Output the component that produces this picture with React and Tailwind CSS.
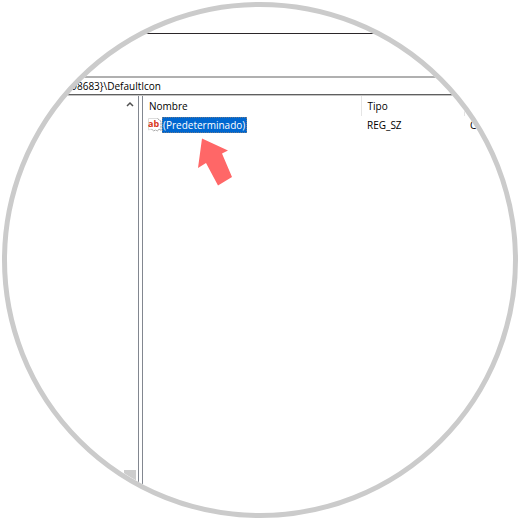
import { useState } from "react";

const valores = [{ nombre: "(Predeterminado)", tipo: "REG_SZ", datos: "C:\\" }];

function IconoCadena() {
    return (
        <svg width="14" height="14" viewBox="0 0 14 14" className="shrink-0" aria-hidden="true">
            <path
                d="M.5.5h9l3.500 3v9l-2-1.500-1.500 2-2-1-2 1-2-2-3 1z"
                fill="#fff"
                stroke="#dcdcdc"
            />
            <path
                d="M9.500.5 13 3.500v9l-2-1.500-1.500 2-2-1-2 1-2-2"
                fill="none"
                stroke="#a8a8a8"
                strokeDasharray="2 1"
            />
            <text
                x="0"
                y="9"
                fontSize="9"
                fontWeight="700"
                fontFamily="'Open Sans', sans-serif"
                fill="#d8361a"
            >
                ab
            </text>
        </svg>
    );
}

function Flecha() {
    return (
        <svg
            width="36"
            height="50"
            viewBox="0 0 36 50"
            className="absolute top-5 left-12"
            aria-hidden="true"
        >
            <path d="M6 1.500 32 13.500 26 16.500 36 40 22 48.500 10 26 2 31z" fill="#ff6767" />
        </svg>
    );
}

export default function App() {
    const [seleccionado, setSeleccionado] = useState("(Predeterminado)");

    return (
        <div className="bg-white p-0.5 font-['Open_Sans','Noto_Sans',sans-serif] text-[10px] leading-4 text-black">
            <main className="flex aspect-square w-full flex-col overflow-hidden rounded-full border-5 border-[#cbcbcb] bg-white">
                <div className="h-[27px] shrink-0 border-b border-[#2b2629]" />

                {/* Barra de direcciones */}
                <div className="h-[42px] shrink-0" />
                <div className="flex h-[19px] shrink-0 items-center border-t-2 border-b border-t-[#b0b0b0] border-b-[#5f5f5f]">
                    <p className="w-[154px] overflow-hidden text-right whitespace-nowrap">
                        e98683&#125;\DefaultIcon
                    </p>
                </div>

                <div className="flex min-h-0 flex-1 border-t border-[#c4c4c4]">
                    {/* Árbol con su barra de desplazamiento */}
                    <div className="flex w-[132px] shrink-0 justify-end border-r border-[#828790]">
                        <div className="flex w-4 flex-col items-center">
                            <button type="button" aria-label="Subir" className="flex h-4 w-4 items-center justify-center">
                                <svg width="8" height="6" viewBox="0 0 8 6" aria-hidden="true">
                                    <path d="M1 5 4 2 7 5" fill="none" stroke="#505050" strokeWidth="1.5" />
                                </svg>
                            </button>
                            <div className="flex-1" />
                            <div className="h-[43px] w-3 bg-[#cdcdcd]" />
                        </div>
                    </div>

                    <div className="ml-[3px] min-w-0 flex-1 border-l border-[#828790]">
                        <table className="w-full table-fixed border-collapse text-left">
                            <colgroup>
                                <col className="w-[218px]" />
                                <col className="w-[103px]" />
                                <col />
                            </colgroup>
                            <thead>
                                <tr className="h-5">
                                    <th className="border-r border-[#e5e5e5] pl-1.5 font-normal">Nombre</th>
                                    <th className="border-r border-[#e5e5e5] pl-1.5 font-normal">Tipo</th>
                                    <th className="pl-1.5 font-normal">Datos</th>
                                </tr>
                            </thead>
                            <tbody>
                                {valores.map((valor) => (
                                    <tr key={valor.nombre} className="h-[18px]">
                                        <td className="pl-[5px]">
                                            <div className="relative flex items-center">
                                                <IconoCadena />
                                                <button
                                                    type="button"
                                                    onClick={() => setSeleccionado(valor.nombre)}
                                                    className={
                                                        seleccionado === valor.nombre
                                                            ? "border border-dotted border-[#6b7a8c] bg-[#0067d0] pr-px leading-[14px] text-white"
                                                            : "border border-transparent pr-px leading-[14px]"
                                                    }
                                                >
                                                    {valor.nombre}
                                                </button>
                                                <Flecha />
                                            </div>
                                        </td>
                                        <td className="pl-1.5">{valor.tipo}</td>
                                        <td className="pl-1.5">{valor.datos}</td>
                                    </tr>
                                ))}
                            </tbody>
                        </table>
                    </div>
                </div>
            </main>
        </div>
    );
}
